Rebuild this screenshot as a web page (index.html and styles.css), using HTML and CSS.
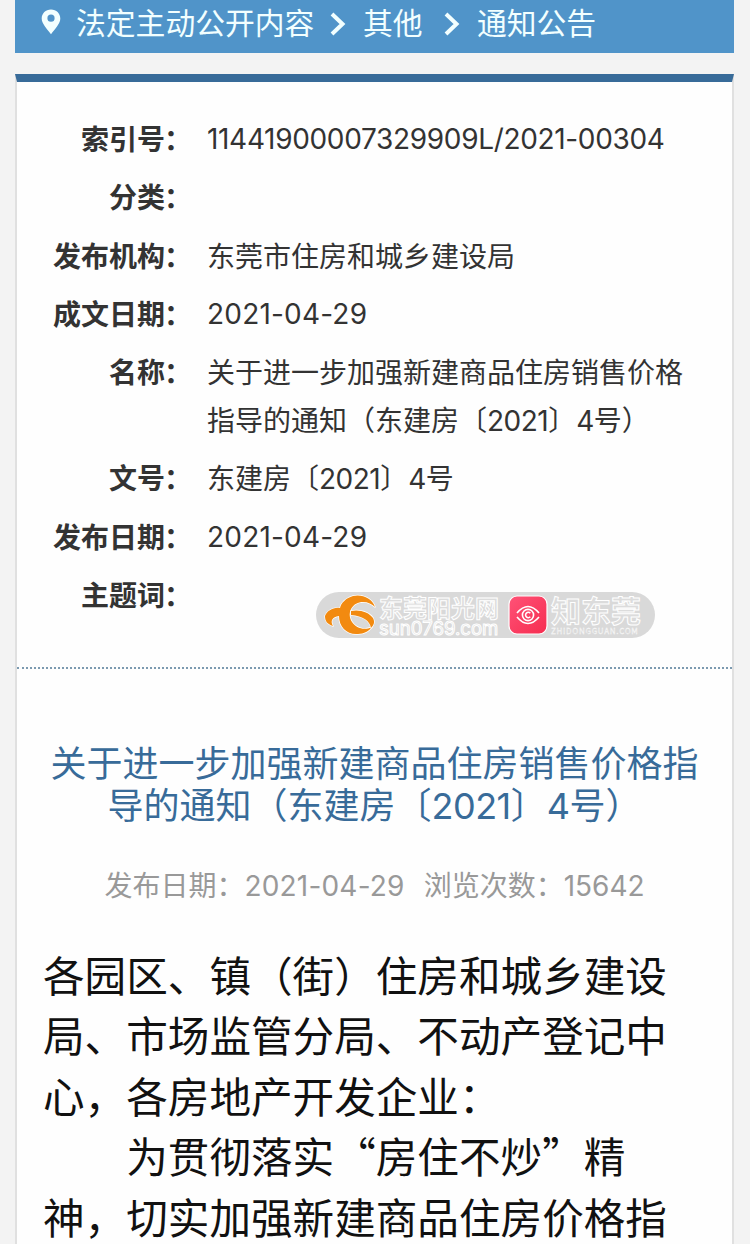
FILE: index.html
```html
<!DOCTYPE html>
<html lang="zh-CN">
<head>
  <meta charset="UTF-8">
  <meta name="viewport" content="width=device-width, initial-scale=1.0">
  <title>关于进一步加强新建商品住房销售价格指导的通知</title>
  <link rel="stylesheet" href="styles.css">
</head>
<body>
  <div class="crumb">
    <svg class="pin" viewBox="0 0 20 26"><path fill-rule="evenodd" d="M10 0.5C4.6 0.5 0.7 4.4 0.7 9.4C0.7 14.5 5.5 19 10 25.2C14.5 19 19.3 14.5 19.3 9.4C19.3 4.4 15.4 0.5 10 0.5ZM10 5.6A3.6 3.6 0 1 1 10 12.8A3.6 3.6 0 1 1 10 5.6Z"/></svg>
    <span>法定主动公开内容</span>
    <svg class="arrow" viewBox="0 0 16 24"><path d="M2 2L12.5 12L2 22"/></svg>
    <span>其他</span>
    <svg class="arrow second" viewBox="0 0 16 24"><path d="M2 2L12.5 12L2 22"/></svg>
    <span>通知公告</span>
  </div>

  <div class="container">
    <div class="info">
      <dl>
        <dt>索引号<span class="colon">：</span></dt><dd class="code">11441900007329909L/2021-00304</dd>
        <dt>分类<span class="colon">：</span></dt><dd></dd>
        <dt>发布机构<span class="colon">：</span></dt><dd>东莞市住房和城乡建设局</dd>
        <dt>成文日期<span class="colon">：</span></dt><dd class="date">2021-04-29</dd>
        <dt>名称<span class="colon">：</span></dt><dd>关于进一步加强新建商品住房销售价格指导的通知（东建房〔<span class="num">2021</span>〕<span class="num">4</span>号）</dd>
        <dt>文号<span class="colon">：</span></dt><dd>东建房〔<span class="num">2021</span>〕<span class="num">4</span>号</dd>
        <dt>发布日期<span class="colon">：</span></dt><dd class="date">2021-04-29</dd>
        <dt>主题词<span class="colon">：</span></dt><dd></dd>
      </dl>
      <div class="watermark">
        <svg class="sun" viewBox="0 0 54 44">
          <g fill="#f28a10" stroke="#fff" stroke-width="1.4" stroke-linejoin="round" paint-order="stroke">
            <path d="M51 14C48 5 38 1 29 3C22 5 17 10 16 15C9 14 3 18 1 23C1 28 3 31 9 33C6 28 8 24 15 23C15 34 23 42 34 41C40 41 45 38 48 34C40 38 32 35 28 29C22 19 29 9 39 9C44 9 48 11 51 14Z"/>
            <path d="M27 18C35 16 45 19 49 25C51 29 50 32 47 35C46 28 39 23 27 22Z"/>
          </g>
        </svg>
        <div class="site">
          <span class="site-cn">东莞阳光网</span>
          <span class="site-en">sun0769.com</span>
        </div>
        <svg class="app" viewBox="0 0 40 40">
          <defs><linearGradient id="red" x1="0" y1="0" x2="1" y2="1"><stop offset="0" stop-color="#ff5277"/><stop offset="1" stop-color="#f62d50"/></linearGradient></defs>
          <rect x="1" y="1" width="38" height="38" rx="8" fill="url(#red)" stroke="#fff" stroke-width="1.2"/>
          <g fill="none" stroke="#fff" stroke-width="1.6">
            <path d="M9 18Q20 5 31 18M9 22Q20 35 31 22"/>
            <circle cx="20" cy="20" r="5.6"/>
            <path d="M22.3 18.2A2.7 2.7 0 1 0 22.3 21.8"/>
          </g>
        </svg>
        <div class="brand">
          <span class="brand-cn">知东莞</span>
          <span class="brand-en">ZHIDONGGUAN.COM</span>
        </div>
      </div>
    </div>

    <h1>关于进一步加强新建商品住房销售价格指<br>导的通知（东建房〔<span class="num">2021</span>〕<span class="num">4</span>号）</h1>
    <p class="meta"><span>发布日期：<span class="date">2021-04-29</span></span><span>浏览次数：<span class="num views">15642</span></span></p>

    <div class="article">
      <p>各园区、镇（街）住房和城乡建设<br>局、市场监管分局、不动产登记中<br>心，各房地产开发企业：</p>
      <p class="indent">为贯彻落实“房住不炒”精<br>神，切实加强新建商品住房价格指</p>
    </div>
  </div>
</body>
</html>
```
FILE: styles.css
```css
body {
  margin: 0;
  padding: 0 16px 0 15px;
  height: 1244px;
  overflow: hidden;
  background-color: #f3f3f3;
  font-family: "Noto Sans CJK SC", sans-serif;
  color: #333;
}

.crumb {
  display: flex;
  align-items: center;
  height: 53px;
  padding-left: 26px;
  background-color: #5094c9;
  color: #f2ffff;
  font-size: 29.8px;
  line-height: 48px;
}

.crumb span {
  margin-top: -11px;
  white-space: nowrap;
}

.pin {
  width: 20px;
  height: 26px;
  margin: -9px 15px 0 0;
  fill: #f2ffff;
}

.arrow {
  width: 16px;
  height: 24px;
  margin: -5px 16.5px 0 16px;
  fill: none;
  stroke: #f2ffff;
  stroke-width: 4;
}

.arrow.second {
  margin-left: 22px;
}

.container {
  box-sizing: border-box;
  height: 1200px;
  margin-top: 21px;
  background-color: #fefefe;
  border: 2px solid #e0e0e0;
  border-top: 8px solid #386b99;
}

.info {
  position: relative;
  box-sizing: border-box;
  height: 587px;
  padding: 32px 40px 0 35px;
  border-bottom: 2px dotted #7c9ab0;
}

dl {
  display: grid;
  grid-template-columns: 141px 1fr;
  column-gap: 14px;
  row-gap: 10.3px;
  margin: 0;
  font-size: 28px;
  line-height: 48px;
}

dt {
  font-weight: bold;
  text-align: right;
  white-space: nowrap;
}

dd {
  margin: 0;
  height: 48px;
}

dd:nth-of-type(5) {
  height: 96px;
}

dd.date, dd.code {
  line-height: 51px;
}

.colon {
  margin: 0 1px 0 -1px;
}

.num, .date, .code {
  font-family: Inter, "Noto Sans CJK SC", sans-serif;
}

.num {
  line-height: 1;
  letter-spacing: -0.5px;
}

.date {
  letter-spacing: 0.2px;
}

.views {
  letter-spacing: 0;
}

.code {
  letter-spacing: -0.33px;
}

/* site logos stamped over the info block */
.watermark {
  position: absolute;
  left: 299px;
  top: 510px;
  display: flex;
  align-items: center;
  box-sizing: border-box;
  width: 339px;
  height: 46px;
  padding-left: 8px;
  border-radius: 23px;
  background-color: #d9d9d9;
  color: #dcdcdc;
  white-space: nowrap;
}

.sun {
  width: 54px;
  height: 44px;
}

.site, .brand {
  display: flex;
  flex-direction: column;
  -webkit-text-stroke: 1px #fff;
}

.site {
  width: 122px;
  margin-left: 1px;
}

.site-cn {
  font-size: 24px;
  font-weight: bold;
  line-height: 25px;
}

.site-en {
  font-family: Inter, sans-serif;
  font-size: 18.6px;
  line-height: 18px;
}

.app {
  width: 40px;
  height: 40px;
  margin-left: 7px;
}

.brand {
  margin-left: 3px;
}

.brand-cn {
  font-size: 30px;
  font-weight: bold;
  line-height: 31px;
}

.brand-en {
  font-size: 8px;
  line-height: 11px;
  letter-spacing: 0.7px;
  -webkit-text-stroke: 0.3px #fff;
}

h1 {
  margin: 71px 0 0;
  color: #386b99;
  font-size: 36px;
  font-weight: normal;
  line-height: 42px;
  text-align: center;
}

.meta {
  display: flex;
  justify-content: center;
  gap: 19px;
  height: 48px;
  margin: 36px 0 0;
  color: #999;
  font-size: 28px;
  line-height: 48px;
}

.meta .date {
  line-height: 1;
}

.article {
  padding: 36px 0 0 26px;
  color: #111;
  font-size: 41.6px;
  line-height: 60.4px;
  white-space: nowrap;
}

.article p {
  margin: 0;
}

.article .indent {
  text-indent: 2em;
}
```
